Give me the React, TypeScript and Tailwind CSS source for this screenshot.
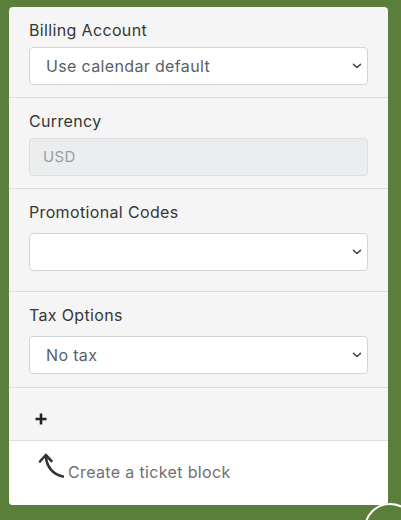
import { ReactNode } from "react";

const FONT = { fontFamily: "Inter, 'Noto Sans', sans-serif", letterSpacing: "0.35px" };

function Chevron() {
  return (
    <svg width="10" height="6" viewBox="0 0 10 6" className="pointer-events-none absolute right-[6px] top-1/2 -translate-y-1/2">
      <path d="M1.5 1.3L5 4.5l3.5-3.2" fill="none" stroke="#4a4f54" strokeWidth="1.6" strokeLinecap="round" strokeLinejoin="round" />
    </svg>
  );
}

function SelectBox({ value }: { value?: string }) {
  return (
    <div className="relative">
      <select
        defaultValue={value ?? ""}
        className="h-[38px] w-full appearance-none rounded-[4px] border border-[#ced4da] bg-white pl-[16px] pr-8 text-[16px] text-[#5a6066] outline-none"
        style={FONT}
      >
        <option value={value ?? ""}>{value ?? ""}</option>
      </select>
      <Chevron />
    </div>
  );
}

function Section({ label, children, gap, pad }: { label: string; children: ReactNode; gap: string; pad: string }) {
  return (
    <div className={`border-b border-[#dedede] px-5 pt-3 ${pad}`}>
      <div className={`text-[16px] leading-[22px] text-[#363636] ${gap}`}>{label}</div>
      {children}
    </div>
  );
}

export default function App() {
  return (
    <div className="relative h-[520px] w-[401px] overflow-hidden bg-[#5a7f3b] pt-[7px] pl-[9px]" style={FONT}>
      <div className="w-[379px] overflow-hidden rounded-[4px] bg-[#f5f5f5]">
        <Section label="Billing Account" gap="mb-1.5" pad="pb-3">
          <SelectBox value="Use calendar default" />
        </Section>
        <Section label="Currency" gap="mb-1.5" pad="pb-3">
          <div className="flex h-[38px] items-center rounded-[4px] border border-[#dcdfe2] bg-[#ebedef] pl-[13px] text-[15px] text-[#9a9da0]">
            USD
          </div>
        </Section>
        <Section label="Promotional Codes" gap="mb-2.5" pad="pb-5">
          <SelectBox />
        </Section>
        <Section label="Tax Options" gap="mb-2.5" pad="pb-[13px]">
          <SelectBox value="No tax" />
        </Section>
        <div className="flex h-[53px] items-end border-b border-[#dedede] px-[26px] pb-[15px]">
          <svg width="12" height="12" viewBox="0 0 12 12">
            <path d="M6 0.5v11M0.5 6h11" stroke="#222" strokeWidth="2.6" />
          </svg>
        </div>
        <div className="flex h-[64px] items-start bg-white pl-[29px] pt-[12px]">
          <svg width="26" height="26" viewBox="0 0 26 26" className="shrink-0">
            <path d="M8 4.5 C9 14 15 21.5 25 23.5" fill="none" stroke="#333" strokeWidth="2.6" strokeLinecap="round" />
            <path d="M2 8.5 L7.8 2 L13.5 8" fill="none" stroke="#333" strokeWidth="2.6" strokeLinecap="round" strokeLinejoin="round" />
          </svg>
          <span className="ml-[4px] mt-[9px] text-[16px] leading-[20px] text-[#707070]">Create a ticket block</span>
        </div>
      </div>
      <div className="absolute left-[364px] top-[503px] h-[52px] w-[52px] rounded-full border-2 border-white bg-[#5a7f3b]" />
    </div>
  );
}
